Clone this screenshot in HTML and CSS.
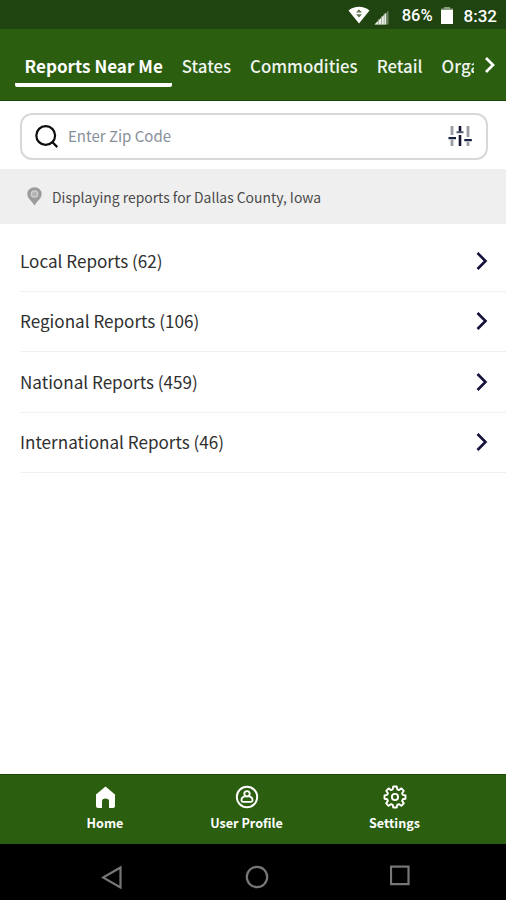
FILE: index.html
```html
<!DOCTYPE html>
<html lang="en">
<head>
  <meta charset="UTF-8" />
  <meta name="viewport" content="width=device-width, initial-scale=1.0" />
  <title>Reports Near Me</title>
  <link rel="stylesheet" href="styles.css">
</head>
<body>
  <div class="app">
    <div class="status-bar">
      <svg class="wifi" width="22" height="18" viewBox="0 0 22 18">
        <path d="M0.5 4.5C6.5-.5 15.5-.5 21.5 4.5L11 17.5z" fill="#fff"/>
        <path d="M11 3.2l3 3.3H8zM8 8.3h6l-3 3.3z" fill="#5f7650"/>
      </svg>
      <svg class="signal" width="15" height="15" viewBox="0 0 15 15">
        <path d="M14.5.5v14H.5z" fill="#6d8360"/>
        <path d="M12 3v11.5H.5z" fill="#e8ece6"/>
        <path d="M4.5 9v5.5M7.5 6v8.5M10.2 3v11.5" stroke="#8b9c80" stroke-width=".7"/>
      </svg>
      <span class="percent">86%</span>
      <svg class="battery" width="12" height="17" viewBox="0 0 12 17">
        <path d="M3.5 0h5v2H12v15H0V2h3.5z" fill="#fff"/>
        <path d="M0 1.5h3.5V0h5v1.5H12V3H0z" fill="#8b9c80"/>
      </svg>
      <span class="time">8:32</span>
    </div>

    <div class="tabs">
      <div class="tab-list">
        <a class="tab active">Reports Near Me</a>
        <a class="tab">States</a>
        <a class="tab">Commodities</a>
        <a class="tab">Retail</a>
        <a class="tab">Organic</a>
      </div>
      <svg class="tab-next" width="12" height="18" viewBox="0 0 12 18">
        <path d="M2 2l7 7-7 7" fill="none" stroke="#fff" stroke-width="2.7"/>
      </svg>
    </div>

    <div class="search">
      <div class="search-box">
        <svg width="24" height="24" viewBox="0 0 24 24" fill="none" stroke="#0c0c0c" stroke-width="2.2">
          <circle cx="10.7" cy="10.5" r="9.4"/>
          <path d="M17 16.8l5.3 5.3"/>
        </svg>
        <span class="placeholder">Enter Zip Code</span>
        <svg class="filter" width="24" height="20" viewBox="0 0 24 20" fill="none">
          <path d="M4 0v9M4 14v6M20 0v11M20 16v4" stroke="#9a9ca6" stroke-width="2.8"/>
          <path d="M12 0v6M12 9v11" stroke="#14142f" stroke-width="2.6"/>
          <path d="M8.5 6.2h7" stroke="#555a70" stroke-width="2"/>
          <path d="M.5 12.2h7.5M16.3 14.2h7.5" stroke="#14213f" stroke-width="2.2"/>
        </svg>
      </div>
    </div>

    <div class="location">
      <svg width="15" height="19" viewBox="0 0 15 19">
        <path d="M7.5.3C3.5.3.3 3.3.3 7c0 4.5 4.7 7 7.2 11.5C10 14 14.7 11.5 14.7 7 14.7 3.3 11.5.3 7.5.3z" fill="#9b9b9b"/>
        <circle cx="7.5" cy="7" r="3.2" fill="#b4b4b4" stroke="#d2d2d2" stroke-width="1.3"/>
      </svg>
      <span>Displaying reports for Dallas County, Iowa</span>
    </div>

    <div class="reports">
      <div class="report">
        <span>Local Reports (62)</span>
        <svg width="12" height="20" viewBox="0 0 12 20"><path d="M1.5 2l8 8-8 8"/></svg>
      </div>
      <div class="report">
        <span>Regional Reports (106)</span>
        <svg width="12" height="20" viewBox="0 0 12 20"><path d="M1.5 2l8 8-8 8"/></svg>
      </div>
      <div class="report">
        <span>National Reports (459)</span>
        <svg width="12" height="20" viewBox="0 0 12 20"><path d="M1.5 2l8 8-8 8"/></svg>
      </div>
      <div class="report">
        <span>International Reports (46)</span>
        <svg width="12" height="20" viewBox="0 0 12 20"><path d="M1.5 2l8 8-8 8"/></svg>
      </div>
    </div>

    <div class="bottom-nav">
      <a class="nav-item">
        <svg width="24" height="24" viewBox="0 0 24 24">
          <path d="M12.5 1.5l9.500 8v11.500q0 2-2 2h-4v-7q0-2.500-3.500-2.500T9 16v7H5q-2 0-2-2V9.500z" fill="#fff"/>
        </svg>
        <span>Home</span>
      </a>
      <a class="nav-item profile">
        <svg width="24" height="24" viewBox="0 0 24 24" fill="none" stroke="#fff">
          <circle cx="12" cy="12" r="10.2" stroke-width="1.9"/>
          <circle cx="12" cy="8.8" r="2.7" stroke-width="1.8"/>
          <path d="M9.8 11.3c-2.6.6-3.5 2.2-3.3 4.2q.2 1.300 1.600 1.300h7.800q1.400 0 1.600-1.300c.2-2-.7-3.600-3.300-4.200" stroke-width="1.8"/>
        </svg>
        <span>User Profile</span>
      </a>
      <a class="nav-item settings">
        <svg width="24" height="24" viewBox="0 0 24 24" fill="none" stroke="#fff" stroke-width="1.9" stroke-linejoin="round">
          <path d="M10.3 1.5h3.4l.6 2.9 1.6.7 2.5-1.7 2.4 2.4-1.7 2.5.7 1.6 2.7.6v3.2l-2.7.6-.7 1.6 1.7 2.5-2.4 2.4-2.5-1.7-1.6.7-.6 2.7h-3.4l-.6-2.7-1.6-.7-2.5 1.7-2.4-2.4 1.7-2.5-.7-1.6-2.7-.6v-3.2l2.7-.6.7-1.6-1.7-2.5 2.4-2.4 2.5 1.7 1.6-.7z"/>
          <circle cx="12" cy="12" r="3.1"/>
        </svg>
        <span>Settings</span>
      </a>
    </div>

    <div class="system-nav">
      <svg width="22" height="24" viewBox="0 0 22 24"><path d="M19.5 2.5v20L2 12.5z"/></svg>
      <svg width="24" height="24" viewBox="0 0 24 24"><circle cx="12" cy="12" r="10.2"/></svg>
      <svg width="22" height="24" viewBox="0 0 22 24"><rect x="1" y="1.6" width="17.5" height="17.5"/></svg>
    </div>
  </div>
</body>
</html>
```
FILE: styles.css
```css
* {
  box-sizing: border-box;
}

body {
  margin: 0;
  font-family: "Noto Sans CJK SC", "Open Sans", sans-serif;
  background-color: #fff;
}

svg {
  display: block;
  flex-shrink: 0;
}

.app {
  display: flex;
  flex-direction: column;
  height: 900px;
  width: 506px;
  overflow: hidden;
}

.status-bar {
  display: flex;
  align-items: center;
  justify-content: flex-end;
  height: 29px;
  padding: 2px 9px 0 0;
  background-color: #204410;
  color: #fff;
  font-family: Roboto, sans-serif;
  font-size: 17px;
  font-weight: 500;
}

.wifi {
  margin-top: -2px;
}

.signal {
  margin: 3px 13px 0 4px;
}

.percent {
  font-size: 16.5px;
}

.battery {
  margin: 0 11px 0 8px;
}

.tabs {
  display: flex;
  align-items: center;
  height: 72px;
  padding: 3px 10px 0 15px;
  background-color: #2b5e0e;
  border-bottom: 1px solid #1b4708;
}

.tab-list {
  display: flex;
  width: 459px;
  overflow: hidden;
}

.tab {
  flex-shrink: 0;
  height: 42px;
  padding: 0 9.5px;
  color: #f0f4ee;
  font-size: 16.8px;
  font-weight: 500;
  line-height: 42px;
  white-space: nowrap;
}

.tab.active {
  border-bottom: 4px solid #fff;
  border-radius: 2px;
  color: #fff;
  font-size: 17.1px;
  font-weight: 700;
  line-height: 41px;
}

.tab-next {
  margin: 0 0 2px 10px;
}

.search {
  height: 68px;
  padding: 12px 18px 0 20px;
}

.search-box {
  display: flex;
  align-items: center;
  height: 47px;
  padding: 0 14px 0 13px;
  border: 2px solid #d6d8d9;
  border-radius: 12px;
}

.placeholder {
  flex: 1;
  margin: 0 0 2px 9px;
  color: #87909a;
  font-size: 15px;
  line-height: 20px;
}

.filter {
  margin-bottom: 1px;
}

.location {
  display: flex;
  align-items: center;
  height: 55px;
  padding-left: 27px;
  background-color: #efefef;
  color: #4b4b4b;
  font-size: 13.9px;
}

.location span {
  margin-left: 10px;
}

.reports {
  flex: 1;
  padding: 7.4px 0 0 20px;
}

.report {
  display: flex;
  align-items: center;
  justify-content: space-between;
  height: 60.4px;
  padding-right: 18px;
  border-bottom: 1px solid #f0f0f0;
  color: #303030;
  font-size: 17.1px;
}

.report span {
  margin-bottom: 1px;
}

.report path {
  fill: none;
  stroke: #12123a;
  stroke-width: 2.6;
}

.bottom-nav {
  display: flex;
  height: 70px;
  padding-left: 35px;
  background-color: #2b5e0e;
  border-top: 1px solid #1b4708;
}

.nav-item {
  display: flex;
  flex-direction: column;
  align-items: center;
  width: 140px;
  padding-top: 10px;
  color: #fff;
  font-size: 12.6px;
  font-weight: 700;
  line-height: 28px;
}

.nav-item.profile {
  width: 143px;
}

.nav-item.settings {
  width: 153px;
}

.system-nav {
  display: flex;
  height: 56px;
  padding: 21px 0 0 101px;
  gap: 121.5px;
  background-color: #000;
}

.system-nav svg {
  fill: none;
  stroke: #777;
  stroke-width: 2.2;
}
```
